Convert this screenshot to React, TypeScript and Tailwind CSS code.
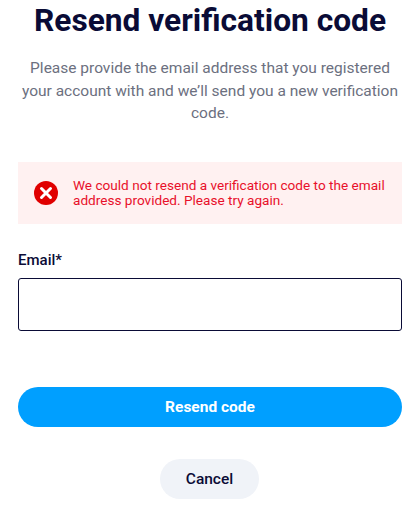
export default function App() {
  return (
    <div className="w-[420px] h-[512px] overflow-hidden bg-white px-[18px] font-['Roboto','Liberation_Sans',sans-serif]">
      <h1 className="pt-[1px] text-center text-[31.7px] leading-[40px] font-bold text-[#0a0b36] whitespace-nowrap">
        Resend verification code
      </h1>
      <p className="mt-[16px] text-center text-[15.5px] leading-[22.5px] text-[#6c7080]">
        Please provide the email address that you registered your account with and we’ll send you a new verification code.
      </p>
      <div className="mt-[37px] flex h-[62px] items-center gap-[15px] bg-[#fff1f1] px-[16px]">
        <svg width="24" height="24" viewBox="0 0 24 24" className="shrink-0">
          <circle cx="12" cy="12" r="12" fill="#e00000" />
          <path d="M7.5 7.5l9 9M16.5 7.5l-9 9" stroke="#fff" strokeWidth="3" strokeLinecap="round" />
        </svg>
        <p className="pt-[1px] text-[13.6px] leading-[15px] text-[#e8102a]">
          We could not resend a verification code to the email address provided. Please try again.
        </p>
      </div>
      <label className="mt-[26px] block text-[15px] leading-[20px] font-medium text-[#0a0b36]">Email*</label>
      <input className="mt-[8px] block h-[53px] w-full rounded-[3px] border border-[#0a0b36] bg-white" />
      <button className="mt-[56px] block h-[40px] w-full rounded-full bg-[#009fff] pt-[2px] text-[15.5px] font-bold text-white">
        Resend code
      </button>
      <div className="mt-[32px] flex justify-center">
        <button className="mr-[1px] h-[40px] w-[99px] rounded-full bg-[#f0f3f8] pt-[2px] text-[15.5px] font-medium text-[#0a0b36]">
          Cancel
        </button>
      </div>
    </div>
  )
}
